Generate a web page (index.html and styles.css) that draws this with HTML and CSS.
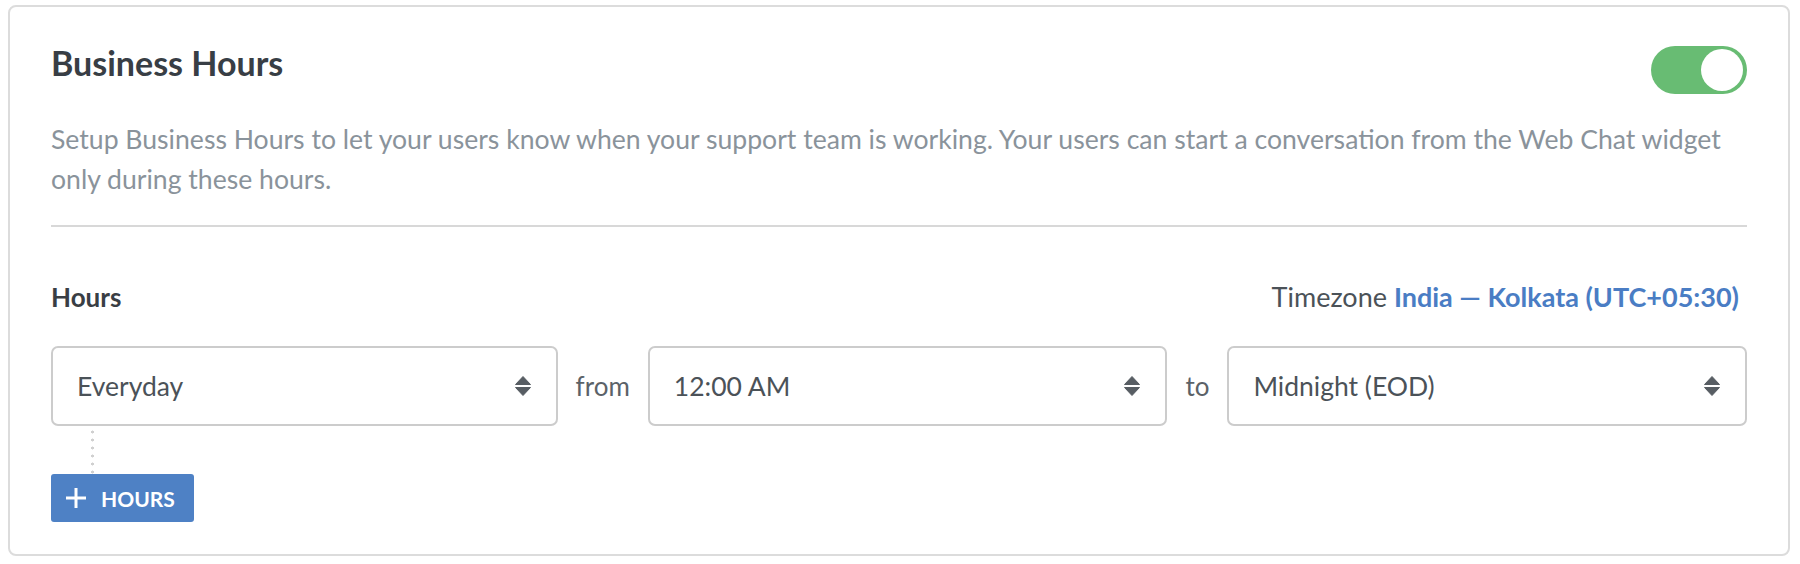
FILE: index.html
```html
<!DOCTYPE html>
<html lang="en">
<head>
<meta charset="utf-8">
<title>Business Hours</title>
<link rel="stylesheet" href="styles.css">
</head>
<body>
<section class="card">
  <div class="head">
    <h1 class="title">Business Hours</h1>
    <span class="toggle" role="switch" aria-checked="true"><span class="knob"></span></span>
  </div>
  <p class="desc">Setup Business Hours to let your users know when your support team is working. Your users can start a conversation from the Web Chat widget only during these hours.</p>
  <hr class="divider">
  <div class="hours-head">
    <h2 class="label">Hours</h2>
    <div class="tz">Timezone <a class="tz-link" href="#">India — Kolkata (UTC+05:30)</a></div>
  </div>
  <div class="row">
    <div class="select"><span>Everyday</span><svg class="arrows" width="16" height="20" viewBox="0 0 16 20"><path d="M8 0.5 L15.5 8.5 L0.5 8.5 Z M0.5 11.5 L15.5 11.5 L8 19.5 Z" fill="#575d63" stroke="#575d63" stroke-width="1" stroke-linejoin="round"/></svg></div>
    <span class="word">from</span>
    <div class="select"><span>12:00 AM</span><svg class="arrows" width="16" height="20" viewBox="0 0 16 20"><path d="M8 0.5 L15.5 8.5 L0.5 8.5 Z M0.5 11.5 L15.5 11.5 L8 19.5 Z" fill="#575d63" stroke="#575d63" stroke-width="1" stroke-linejoin="round"/></svg></div>
    <span class="word">to</span>
    <div class="select"><span>Midnight (EOD)</span><svg class="arrows" width="16" height="20" viewBox="0 0 16 20"><path d="M8 0.5 L15.5 8.5 L0.5 8.5 Z M0.5 11.5 L15.5 11.5 L8 19.5 Z" fill="#575d63" stroke="#575d63" stroke-width="1" stroke-linejoin="round"/></svg></div>
  </div>
  <div class="connector"></div>
  <button class="add" type="button"><svg width="22" height="22" viewBox="0 0 22 22"><path d="M11 1 V21 M1 11 H21" stroke="#fff" stroke-width="3"/></svg><span>HOURS</span></button>
</section>
</body>
</html>
```

FILE: styles.css
```css
* { box-sizing: border-box; }

body {
  margin: 0;
  background: #fff;
  font-family: "Lato", "Open Sans", sans-serif;
  color: #4b5258;
}

.card {
  margin: 5px 10px 0 8px;
  border: 2px solid #dcdcdc;
  border-radius: 8px;
  padding: 39px 41px 32px 41px;
}

.head {
  display: flex;
  justify-content: space-between;
  align-items: flex-start;
}

.title {
  margin: 0;
  font-size: 34px;
  line-height: 34px;
  font-weight: 700;
  color: #383e45;
}

.toggle {
  position: relative;
  display: block;
  width: 96px;
  height: 48px;
  border-radius: 24px;
  background: #68bc73;
}

.knob {
  position: absolute;
  right: 4px;
  top: 3px;
  width: 42px;
  height: 42px;
  border-radius: 50%;
  background: #fff;
}

.desc {
  margin: 25px 0 0 0;
  max-width: 1680px;
  font-size: 26.6px;
  line-height: 40px;
  color: #8a939b;
}

.divider {
  margin: 26px 0 0 0;
  border: 0;
  height: 2px;
  background: #d8d8d8;
}

.hours-head {
  margin-top: 54px;
  display: flex;
  justify-content: space-between;
  align-items: baseline;
  height: 32px;
}

.label {
  margin: 0;
  font-size: 26px;
  line-height: 32px;
  font-weight: 700;
  color: #393e44;
}

.tz {
  font-size: 27px;
  line-height: 32px;
  color: #4b5258;
  padding-right: 8px;
}

.tz-link {
  color: #4a7dc4;
  font-weight: 700;
  text-decoration: none;
}

.row {
  margin-top: 33px;
  display: grid;
  grid-template-columns: 507fr auto 520fr auto 520fr;
  column-gap: 18px;
  align-items: center;
}

.select {
  height: 80px;
  border: 2px solid #cccccc;
  border-radius: 7px;
  display: flex;
  align-items: center;
  justify-content: space-between;
  padding: 0 25px 0 24px;
  font-size: 26.5px;
  color: #4b5258;
}

.word {
  font-size: 26px;
  color: #5b6268;
}

.connector {
  margin-left: 40px;
  width: 3px;
  height: 48px;
  background-image: radial-gradient(circle, #d0d0d0 1.4px, transparent 1.6px);
  background-size: 3px 8px;
  background-position: 0 2px;
}

.add {
  display: flex;
  align-items: center;
  gap: 14px;
  width: 143px;
  height: 48px;
  padding: 0 0 0 14px;
  border: 0;
  border-radius: 3px;
  background: #4e81c5;
  color: #fff;
  font-family: "Lato", "Open Sans", sans-serif;
  font-size: 21px;
  font-weight: 700;
}
```
